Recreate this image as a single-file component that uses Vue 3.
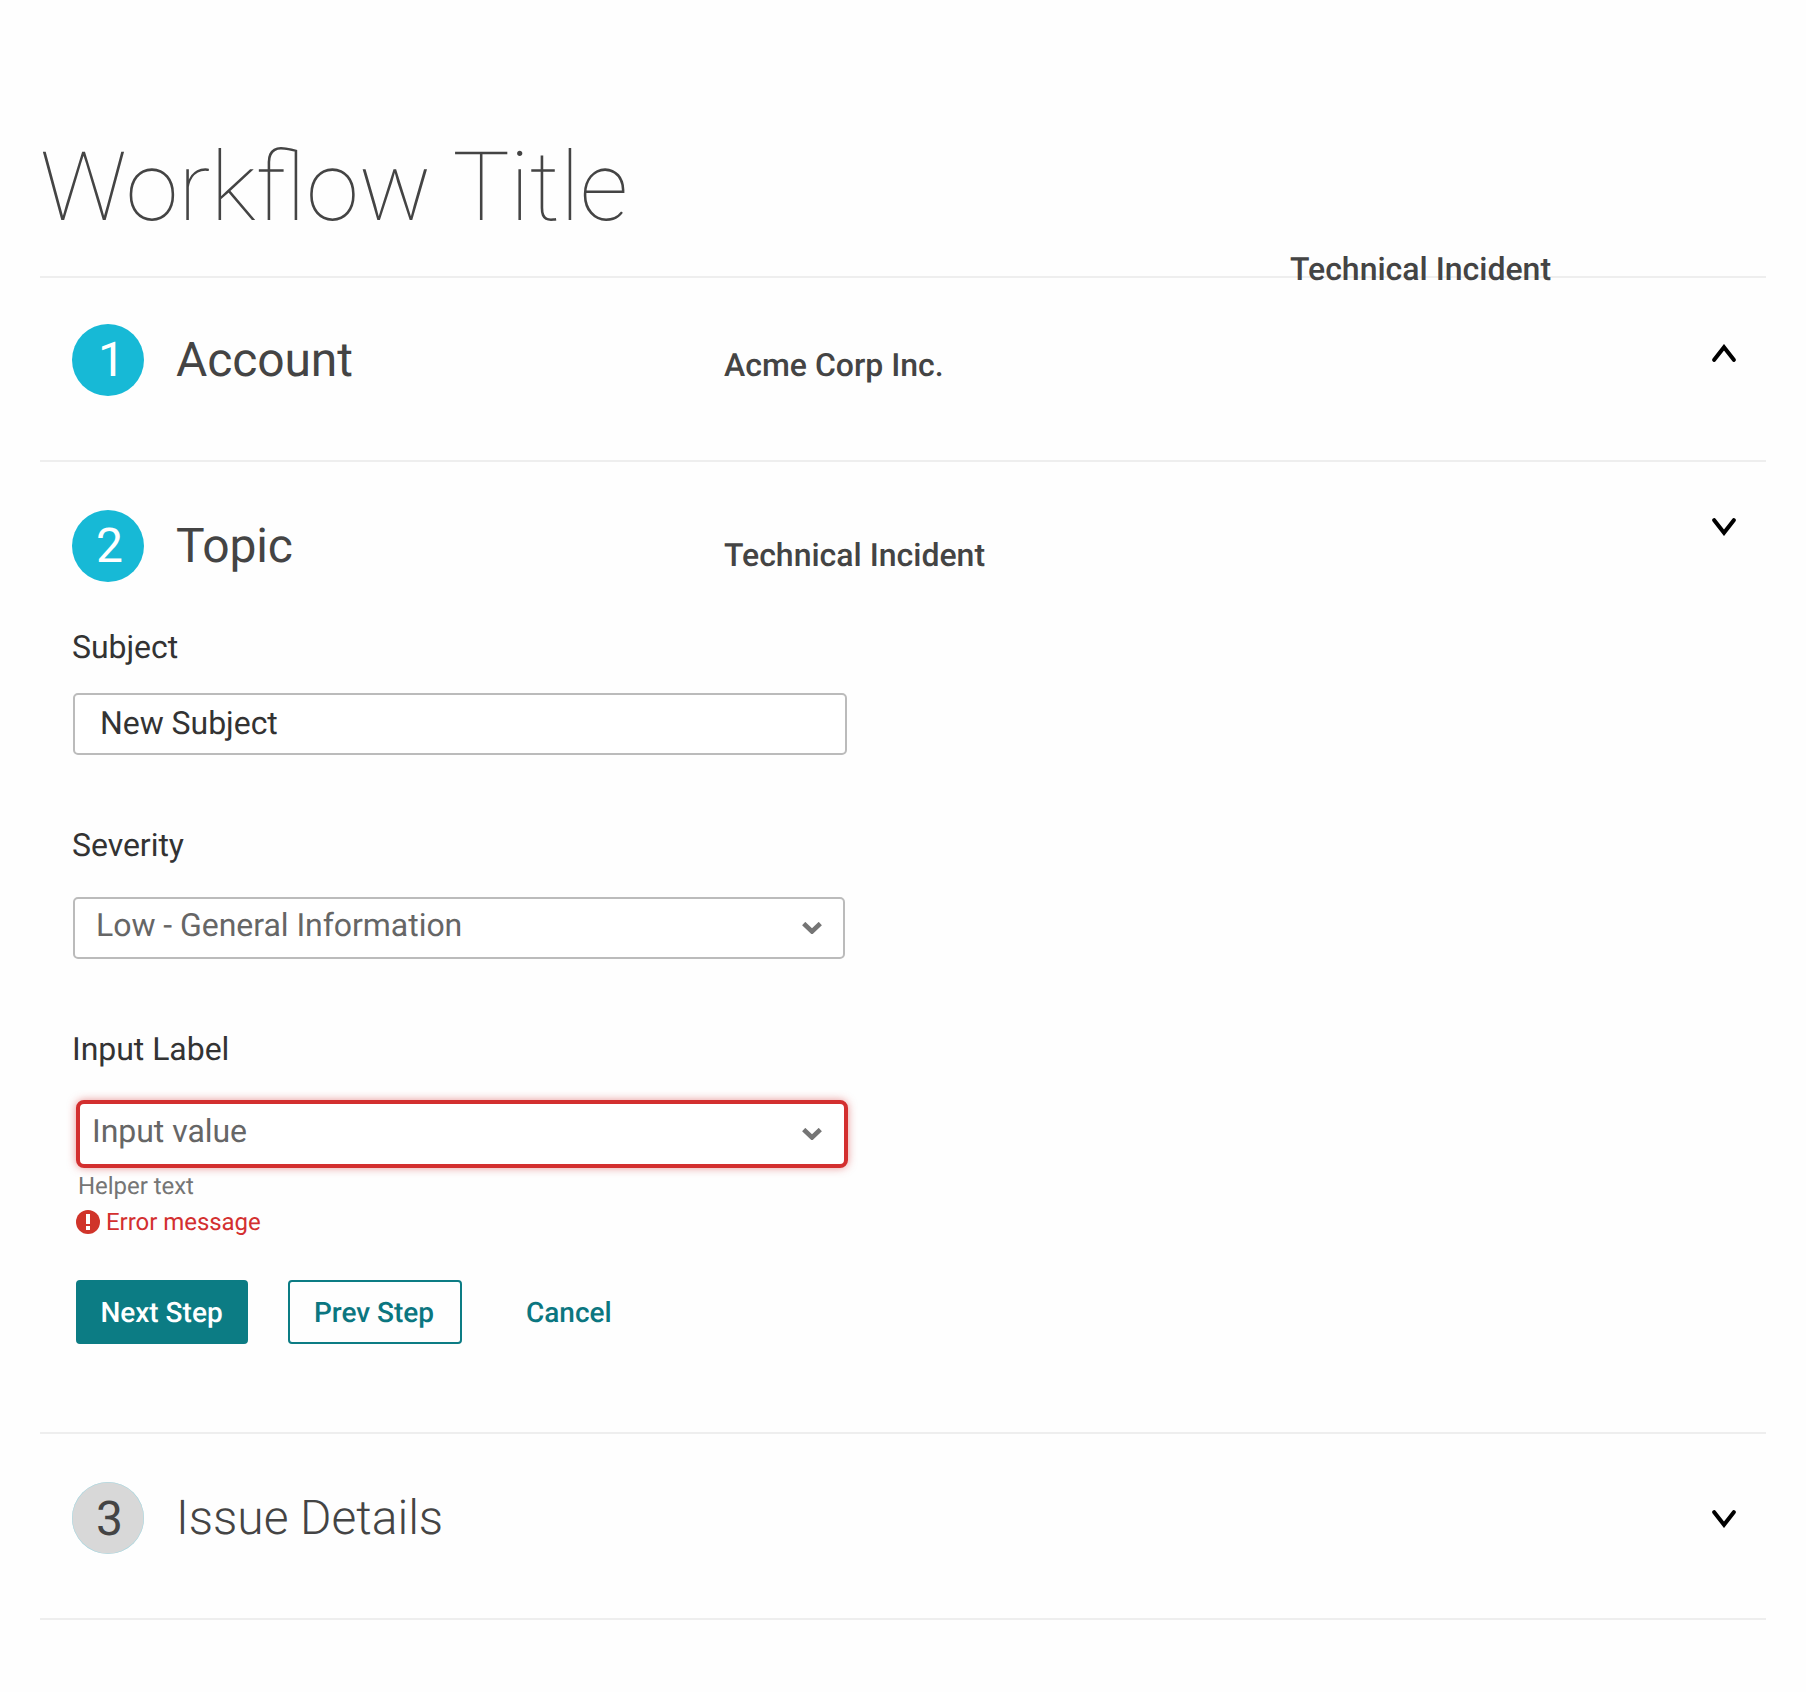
<script setup>
import { ref } from 'vue'

const subject = ref('New Subject')
</script>

<template>
  <main class="workflow">
    <h1 class="title">Workflow Title</h1>

    <section class="step step-account">
      <span class="floating-value">Technical Incident</span>
      <header class="step-head">
        <span class="badge first">1</span>
        <h2>Account</h2>
        <span class="summary">Acme Corp Inc.</span>
        <svg class="toggle" width="24" height="18" viewBox="0 0 24 18"><path d="M2.2 15.8 12 3.2l9.8 12.6" /></svg>
      </header>
    </section>

    <section class="step step-topic">
      <header class="step-head">
        <span class="badge">2</span>
        <h2>Topic</h2>
        <span class="summary">Technical Incident</span>
        <svg class="toggle" width="24" height="18" viewBox="0 0 24 18"><path d="M2.2 2.2 12 14.8l9.8-12.6" /></svg>
      </header>

      <div class="form">
        <span class="label">Subject</span>
        <div class="field subject">{{ subject }}</div>

        <span class="label severity-label">Severity</span>
        <div class="field select">
          <span>Low - General Information</span>
          <svg class="caret" width="20" height="12" viewBox="0 0 20 12"><path d="M1.7 1.5 10 9.5l8.3-8" /></svg>
        </div>

        <span class="label input-label">Input Label</span>
        <div class="field select invalid">
          <span>Input value</span>
          <svg class="caret" width="20" height="12" viewBox="0 0 20 12"><path d="M1.7 1.5 10 9.5l8.3-8" /></svg>
        </div>
        <p class="helper">Helper text</p>
        <p class="error">
          <svg width="24" height="24" viewBox="0 0 24 24">
            <circle cx="12" cy="12" r="12" fill="#d0342a" />
            <path d="M10 4h4v10h-4zM10 16h4v4h-4z" fill="#fff" />
          </svg>
          <span>Error message</span>
        </p>

        <div class="actions">
          <button class="btn primary">Next Step</button>
          <button class="btn outline">Prev Step</button>
          <button class="btn link">Cancel</button>
        </div>
      </div>
    </section>

    <section class="step step-issue">
      <header class="step-head">
        <span class="badge pending">3</span>
        <h2 class="light">Issue Details</h2>
        <svg class="toggle" width="24" height="18" viewBox="0 0 24 18"><path d="M2.2 2.2 12 14.8l9.8-12.6" /></svg>
      </header>
    </section>
  </main>
</template>

<style>
body {
  background: #fefefe;
}
</style>

<style scoped>
.workflow {
  box-sizing: border-box;
  width: 1806px;
  height: 1692px;
  padding: 130px 40px 0;
  font-family: Roboto, "Liberation Sans", sans-serif;
  text-rendering: geometricPrecision;
  color: #444;
  overflow: hidden;
}
.title {
  height: 146px;
  margin: 0;
  font-size: 96px;
  line-height: 116px;
  font-weight: 100;
  white-space: nowrap;
}
.step {
  position: relative;
  box-sizing: border-box;
  border-top: 2px solid #eee;
  padding: 48px 30px 0 32px;
}
.step-account {
  height: 184px;
  padding-top: 46px;
}
.step-topic {
  height: 972px;
}
.step-issue {
  height: 188px;
  border-bottom: 2px solid #eee;
}
.step-head {
  display: flex;
  height: 72px;
}
.badge {
  box-sizing: border-box;
  flex: none;
  width: 72px;
  height: 72px;
  padding-left: 24px;
  border-radius: 50%;
  background: #17b9d6;
  color: #fff;
  font-size: 48px;
  line-height: 72px;
}
.badge.first {
  padding-left: 26px;
}
.badge.pending {
  background: #d8d8d8;
  color: #444;
  line-height: 74px;
  box-shadow: inset 0 0 0 0.5px #a5d8e2;
}
h2 {
  box-sizing: border-box;
  width: 580px;
  margin: 0;
  padding-left: 32px;
  font-size: 48px;
  line-height: 72px;
  font-weight: 400;
  letter-spacing: -0.12px;
}
h2.light {
  font-weight: 300;
  letter-spacing: -0.04px;
}
.summary,
.floating-value {
  font-size: 32px;
  line-height: 38px;
  font-weight: 500;
  white-space: nowrap;
}
.summary {
  padding-top: 22px;
}
.step-topic .summary {
  padding-top: 26px;
}
.floating-value {
  position: absolute;
  top: -28px;
  left: 1250px;
}
.toggle {
  flex: none;
  margin: 20px 0 0 auto;
  fill: none;
  stroke: #000;
  stroke-width: 4;
  stroke-linecap: round;
}
.step-topic .toggle {
  margin-top: 8px;
}
.step-issue .toggle {
  margin-top: 28px;
}
.form {
  display: flex;
  flex-direction: column;
  width: 780px;
  padding-top: 46px;
  letter-spacing: -0.04px;
}
.label {
  height: 65px;
  font-size: 32px;
  line-height: 38px;
  color: #333;
}
.field {
  box-sizing: border-box;
  height: 62px;
  margin-left: 1px;
  border: 2px solid #bbb;
  border-radius: 5px;
  background: #fff;
  font-size: 32px;
  line-height: 38px;
  color: #333;
}
.subject {
  width: 774px;
  padding: 9px 0 0 25px;
}
.severity-label {
  height: 71px;
  margin-top: 71px;
}
.select {
  display: flex;
  justify-content: space-between;
  width: 772px;
  padding: 7px 21px 0;
  color: #666;
}
.caret {
  margin-top: 16px;
  fill: none;
  stroke: #757575;
  stroke-width: 4.6;
}
.input-label {
  height: 70px;
  margin-top: 71px;
}
.invalid {
  height: 68px;
  margin-left: 4px;
  padding: 8px 22px 0 12px;
  border: 4px solid #d32f2f;
  border-radius: 8px;
  box-shadow: 0 0 8px rgba(211, 47, 47, 0.5);
}
.helper,
.error {
  margin: 0;
  font-size: 24px;
  line-height: 28px;
}
.helper {
  padding: 4px 0 0 6px;
  color: #757575;
}
.error {
  display: flex;
  align-items: flex-start;
  gap: 6px;
  height: 28px;
  margin: 8px 0 0 4px;
  color: #d32f2f;
}
.error svg {
  margin-top: 2px;
}
.actions {
  display: flex;
  margin: 44px 0 0 4px;
}
.btn {
  box-sizing: border-box;
  height: 64px;
  padding: 2px 2px 0 0;
  border: 2px solid #0c7c84;
  border-radius: 4px;
  background: transparent;
  color: #0b7680;
  font: 500 28px/34px Roboto, sans-serif;
  text-rendering: inherit;
  white-space: nowrap;
}
.primary {
  width: 172px;
  padding-right: 1px;
  background: #0c7c84;
  color: #fff;
}
.outline {
  width: 174px;
  margin-left: 40px;
}
.link {
  width: 88px;
  margin-left: 62px;
  border-color: transparent;
}
</style>
